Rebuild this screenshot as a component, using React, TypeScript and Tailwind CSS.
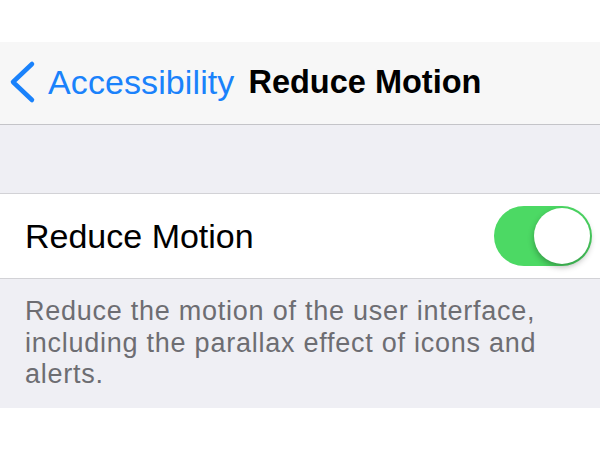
export default function App() {
  return (
    <div className="flex h-[450px] w-[600px] flex-col overflow-hidden bg-white font-['Liberation_Sans',Arial,sans-serif]">
      <div className="h-[42px] shrink-0 bg-white" />
      <nav className="flex h-[83px] shrink-0 items-center border-b border-[#c4c4c8] bg-[#f7f7f7] pb-[2px]">
        <svg width="40" height="44" viewBox="0 0 40 44" className="ml-[5px] shrink-0" aria-hidden>
          <path d="M27 4 L8 22 L27 40" fill="none" stroke="#1a82fb" strokeWidth="4.5" strokeLinecap="round" strokeLinejoin="round" />
        </svg>
        <span className="ml-[3px] text-[34px] leading-none tracking-[0.1px] text-[#1a82fb]">Accessibility</span>
        <span className="ml-[14px] text-[32.5px] font-bold leading-none text-black">Reduce Motion</span>
      </nav>
      <div className="h-[69px] shrink-0 border-b border-[#d2d2d6] bg-[#efeff4]" />
      <div className="flex h-[85px] shrink-0 items-center justify-between border-b border-[#d2d2d6] bg-white pl-[25px] pr-[8px]">
        <span className="text-[34px] leading-none text-black">Reduce Motion</span>
        <div className="relative h-[60px] w-[98px] rounded-full bg-[#4cd964]">
          <div className="absolute right-[2px] top-[2px] h-[56px] w-[56px] rounded-full bg-white shadow-[0_3px_6px_rgba(0,0,0,0.3)]" />
        </div>
      </div>
      <div className="h-[129px] shrink-0 bg-[#efeff4] px-[25px] pt-[17px]">
        <p className="whitespace-nowrap text-[27px] leading-[31.5px] tracking-[0.75px] text-[#6d6d72]">
          Reduce the motion of the user interface,
          <br />
          including the parallax effect of icons and
          <br />
          alerts.
        </p>
      </div>
      <div className="flex-1 bg-white" />
    </div>
  );
}
